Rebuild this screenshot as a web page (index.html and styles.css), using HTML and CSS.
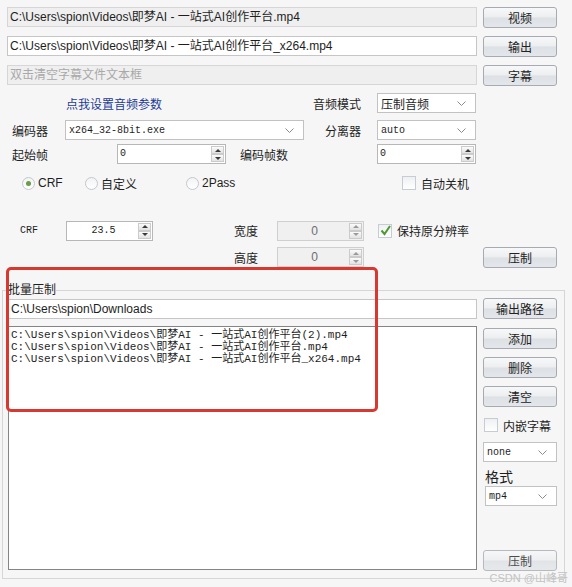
FILE: index.html
```html
<!DOCTYPE html>
<html lang="zh-CN">
<head>
  <meta charset="UTF-8" />
  <title>视频压制</title>
  <link rel="stylesheet" href="styles.css">
</head>
<body>
  <div class="app">
    <div class="file-row">
      <div class="field readonly">C:\Users\spion\Videos\即梦AI - 一站式AI创作平台.mp4</div>
      <button class="btn">视频</button>
    </div>
    <div class="file-row">
      <div class="field">C:\Users\spion\Videos\即梦AI - 一站式AI创作平台_x264.mp4</div>
      <button class="btn">输出</button>
    </div>
    <div class="file-row">
      <div class="field readonly hint">双击清空字幕文件文本框</div>
      <button class="btn">字幕</button>
    </div>

    <div class="row row-audio">
      <span class="link">点我设置音频参数</span>
      <span class="label-right">音频模式</span>
      <div class="select w99"><span>压制音频</span><svg width="9" height="5"><polyline points="0.5,0.5 4.5,4.5 8.5,0.5" fill="none" stroke="#8c8c8c"/></svg></div>
    </div>
    <div class="row row-codec">
      <span class="label-left w58">编码器</span>
      <div class="select w239"><span class="mono">x264_32-8bit.exe</span><svg width="9" height="5"><polyline points="0.5,0.5 4.5,4.5 8.5,0.5" fill="none" stroke="#8c8c8c"/></svg></div>
      <span class="label-right">分离器</span>
      <div class="select w99"><span class="mono">auto</span><svg width="9" height="5"><polyline points="0.5,0.5 4.5,4.5 8.5,0.5" fill="none" stroke="#8c8c8c"/></svg></div>
    </div>
    <div class="row row-frames">
      <span class="label-left w110">起始帧</span>
      <div class="spin w109">
        <span class="spin-val mono">0</span>
        <span class="spin-arrows"><i class="up"></i><i class="down"></i></span>
      </div>
      <span class="frames-label">编码帧数</span>
      <div class="spin w99 push">
        <span class="spin-val mono">0</span>
        <span class="spin-arrows"><i class="up"></i><i class="down"></i></span>
      </div>
    </div>

    <div class="options">
      <label class="radio opt-crf"><span class="dot checked"></span>CRF</label>
      <label class="radio opt-custom"><span class="dot"></span>自定义</label>
      <label class="radio opt-pass"><span class="dot"></span>2Pass</label>
      <label class="check"><span class="box"></span>自动关机</label>
    </div>

    <div class="size-grid">
      <span class="mono crf-label">CRF</span>
      <div class="spin center">
        <span class="spin-val mono">23.5</span>
        <span class="spin-arrows"><i class="up"></i><i class="down"></i></span>
      </div>
      <span class="size-label">宽度</span>
      <div class="spin center disabled">
        <span class="spin-val">0</span>
        <span class="spin-arrows"><i class="up"></i><i class="down"></i></span>
      </div>
      <label class="check keep"><span class="box"><svg width="13" height="13"><polyline points="2.5,6.5 5.5,10 11,2" fill="none" stroke="#4f9a2e" stroke-width="2"/></svg></span>保持原分辨率</label>

      <span class="size-label row2">高度</span>
      <div class="spin center disabled short">
        <span class="spin-val">0</span>
        <span class="spin-arrows"><i class="up"></i><i class="down"></i></span>
      </div>
      <button class="btn encode">压制</button>
    </div>

    <fieldset class="batch">
      <legend>批量压制</legend>
      <div class="batch-grid">
        <div class="field out-dir">C:\Users\spion\Downloads</div>
        <button class="btn">输出路径</button>
        <div class="queue">
          <div>C:\Users\spion\Videos\即梦AI - 一站式AI创作平台(2).mp4</div>
          <div>C:\Users\spion\Videos\即梦AI - 一站式AI创作平台.mp4</div>
          <div>C:\Users\spion\Videos\即梦AI - 一站式AI创作平台_x264.mp4</div>
        </div>
        <div class="side">
          <button class="btn first">添加</button>
          <button class="btn">删除</button>
          <button class="btn">清空</button>
          <label class="check embed"><span class="box"></span>内嵌字幕</label>
          <div class="select sub-select"><span class="mono">none</span><svg width="9" height="5"><polyline points="0.5,0.5 4.5,4.5 8.5,0.5" fill="none" stroke="#8c8c8c"/></svg></div>
          <span class="format-label">格式</span>
          <div class="select format-select"><span class="mono">mp4</span><svg width="9" height="5"><polyline points="0.5,0.5 4.5,4.5 8.5,0.5" fill="none" stroke="#8c8c8c"/></svg></div>
          <button class="btn last">压制</button>
        </div>
      </div>
    </fieldset>

    <div class="mark"></div>
    <div class="watermark">CSDN @山峰哥</div>
  </div>
</body>
</html>
```

FILE: styles.css
```css
* {
  box-sizing: border-box;
}

body {
  margin: 0;
  background: #f6f6f6;
  font-family: "Liberation Sans", "Noto Sans CJK SC", sans-serif;
  font-size: 12px;
  color: #1e1e1e;
}

.app {
  position: relative;
  width: 572px;
  height: 587px;
  padding: 7px 15px 0 7px;
  overflow: hidden;
}

.mono {
  font-family: "Liberation Mono", "Noto Sans CJK SC", monospace;
  font-size: 10px;
}

/* top file rows */
.file-row {
  display: flex;
  gap: 6px;
  height: 21px;
  margin-bottom: 8px;
}

.field {
  flex: 1;
  height: 20px;
  border: 1px solid #c6c6c6;
  background: #fff;
  padding: 0 2px;
  line-height: 18px;
  white-space: nowrap;
  overflow: hidden;
}

.field.readonly {
  background: #efefef;
  border-color: #d6d6d6;
}

.field.hint {
  color: #a9a9a9;
}

.btn {
  width: 74px;
  height: 21px;
  flex: none;
  padding: 0;
  border: 1px solid #a7abb1;
  border-radius: 3px;
  background: linear-gradient(#f7f8f9, #eceef0 48%, #dde0e4 52%, #e3e6ea);
  font-family: inherit;
  font-size: 12px;
  color: #222;
}

/* parameter rows */
.row {
  display: flex;
  align-items: center;
  width: 469px;
  height: 20px;
}

.row-audio {
  margin-top: -1px;
}

.row-codec {
  margin-top: 7px;
}

.row-frames {
  margin-top: 4px;
}

.link {
  margin-left: 59px;
  color: #1d3c94;
}

.label-right {
  margin-left: auto;
  margin-right: 16px;
}

.label-left {
  padding-left: 5px;
}

.w58 { width: 58px; }
.w110 { width: 110px; }
.w99 { width: 99px; }
.w109 { width: 109px; }
.w239 { width: 239px; }

.push {
  margin-left: auto;
}

.select {
  display: flex;
  align-items: center;
  justify-content: space-between;
  height: 20px;
  padding: 0 9px 0 3px;
  border: 1px solid #c2c2c2;
  background: #fff;
}

.frames-label {
  margin-left: 14px;
}

/* spin boxes */
.spin {
  display: flex;
  height: 20px;
  padding: 1px;
  border: 1px solid #b7b7b7;
  background: #fff;
}

.spin-val {
  flex: 1;
  padding-left: 1px;
  line-height: 16px;
}

.spin.center .spin-val {
  text-align: center;
}

.spin.disabled {
  background: #f0f0f0;
  border-color: #cfcfcf;
}

.spin.disabled .spin-val {
  color: #6d6d6d;
}

.spin-arrows {
  display: flex;
  flex-direction: column;
  width: 13px;
}

.spin-arrows i {
  display: flex;
  align-items: center;
  justify-content: center;
  flex: 1;
  border: 1px solid #cbcbcb;
  background: linear-gradient(#fbfbfb, #e2e2e2);
}

.spin-arrows i::after {
  content: "";
  border-left: 3px solid transparent;
  border-right: 3px solid transparent;
}

.spin-arrows .up::after {
  border-bottom: 3px solid #3a3a3a;
}

.spin-arrows .down::after {
  border-top: 3px solid #3a3a3a;
}

.spin.disabled .spin-arrows i::after {
  border-bottom-color: #9a9a9a;
  border-top-color: #9a9a9a;
}

.spin.disabled .spin-arrows .up::after {
  border-top-color: transparent;
}

.spin.disabled .spin-arrows .down::after {
  border-bottom-color: transparent;
}

/* radios and checks */
.options {
  display: flex;
  align-items: center;
  height: 14px;
  margin-top: 12px;
  padding-left: 15px;
}

.radio,
.check {
  display: flex;
  align-items: center;
  gap: 3px;
}

.opt-crf { width: 63px; }
.opt-custom { width: 101px; }
.opt-pass { width: 216px; }

.dot {
  display: flex;
  align-items: center;
  justify-content: center;
  width: 13px;
  height: 13px;
  border: 1px solid #c4c8cc;
  border-radius: 50%;
  background: linear-gradient(#f2f3f4, #fff);
}

.dot.checked::after {
  content: "";
  width: 5px;
  height: 5px;
  border-radius: 50%;
  background: #6a9b45;
}

.box {
  display: block;
  width: 14px;
  height: 14px;
  margin-right: 2px;
  border: 1px solid #c5ccd3;
  background: linear-gradient(#eef0f2, #fff);
}

.box svg {
  display: block;
  margin: -1px 0 0 0;
}

/* crf / size grid */
.size-grid {
  display: grid;
  grid-template-columns: 59px 87px 124px 87px 1fr;
  grid-template-rows: 21px 21px;
  row-gap: 6px;
  align-items: center;
  margin-top: 30px;
}

.crf-label {
  padding-left: 13px;
}

.size-label {
  padding-left: 81px;
}

.size-label.row2 {
  grid-column: 3;
}

.spin.short {
  height: 20px;
  align-self: start;
}

.keep {
  padding-left: 14px;
}

.encode {
  justify-self: end;
}

/* batch group */
.batch {
  min-width: 0;
  margin: 15px -8px 0 -5px;
  padding: 1px 7px 7px 5px;
  border: 1px solid #d6d6d6;
}

.batch legend {
  padding: 0;
  font-size: 12px;
  line-height: 14px;
}

.batch-grid {
  display: grid;
  grid-template-columns: 469px 74px;
  grid-template-rows: 21px 245px;
  column-gap: 6px;
  row-gap: 7px;
}

.out-dir {
  align-self: end;
}

.queue {
  height: 244px;
  padding: 2px;
  border: 1px solid #858585;
  background: #fff;
  font-family: "Liberation Mono", "Noto Sans CJK SC", monospace;
  font-size: 11px;
  line-height: 12px;
  white-space: nowrap;
}

.side {
  display: flex;
  flex-direction: column;
  gap: 8px;
}

.side .first {
  margin-top: 2px;
}

.embed {
  margin: 3px 0 0 1px;
  height: 14px;
}

.sub-select {
  margin-top: 2px;
}

.format-label {
  margin: 0 0 -6px 2px;
  font-size: 14px;
  line-height: 14px;
}

.format-select {
  margin-left: 2px;
}

.side .last {
  margin-top: auto;
  opacity: 0.8;
}

/* overlays */
.mark {
  position: absolute;
  left: 6px;
  top: 267px;
  width: 372px;
  height: 145px;
  border: 3px solid #d7382f;
  border-radius: 5px;
}

.watermark {
  position: absolute;
  right: 4px;
  bottom: 2px;
  font-size: 11px;
  color: #c3c3c3;
}
```
